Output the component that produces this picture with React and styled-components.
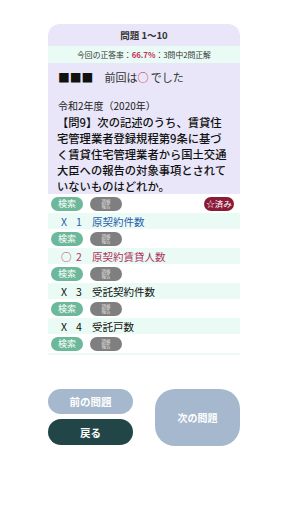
import React from "react";
import styled, { createGlobalStyle } from "styled-components";

const GlobalStyle = createGlobalStyle`
  body {
    margin: 0;
    background: #ffffff;
    font-family: "Noto Sans CJK JP", "Noto Sans", sans-serif;
    color: #222;
  }
`;

const Page = styled.div`
  width: 288px;
  padding: 24px 48px 0;
  box-sizing: border-box;
`;

const Card = styled.div`
  width: 192px;
`;

const Header = styled.div`
  height: 22px;
  display: flex;
  align-items: center;
  justify-content: center;
  background: #e8e6f8;
  border-radius: 12px 12px 0 0;
  font-size: 9.5px;
  font-weight: 700;
  color: #333;
`;

const Rate = styled.div`
  height: 17px;
  display: flex;
  align-items: center;
  justify-content: center;
  background: #e9fbf4;
  font-size: 7.8px;
  color: #333;
`;

const Percent = styled.span`
  color: #c2305c;
  font-weight: 700;
`;

const Body = styled.div`
  background: #e8e6f8;
  padding: 6px 10px 0;
  box-sizing: border-box;
`;

const Previous = styled.div`
  display: flex;
  align-items: center;
  gap: 11px;
  height: 16px;
  font-size: 11px;
  color: #333;
  margin-bottom: 13px;
`;

const Squares = styled.span`
  font-size: 11.8px;
  line-height: 16px;
  color: #111;
`;

const Circle = styled.span`
  color: #d0204a;
`;

const Year = styled.div`
  font-size: 10px;
  line-height: 16px;
  color: #222;
`;

const Question = styled.div`
  font-size: 11.3px;
  line-height: 16px;
  font-weight: 500;
  color: #111;
  margin-left: -1px;
`;

const ButtonRow = styled.div`
  height: 19px;
  display: flex;
  align-items: center;
  padding: 0 6px 0 3px;
  gap: 7px;
`;

const Pill = styled.span`
  width: 32px;
  height: 14px;
  border-radius: 7px;
  display: flex;
  flex-direction: column;
  align-items: center;
  justify-content: center;
  background: ${(p) => p.$bg};
  color: #fff;
  font-size: 9px;
  line-height: 1;
`;

const Tiny = styled.span`
  font-size: 8px;
  line-height: 9px;
  height: 5px;
  color: #e6e6e6;
  transform: scale(0.55);
  transform-origin: center center;
  white-space: nowrap;
  display: flex;
  align-items: center;
`;

const Done = styled(Pill)`
  margin-left: auto;
  width: 30px;
  height: 14px;
  font-size: 8.5px;
`;

const Choice = styled.div`
  height: 16px;
  display: flex;
  align-items: center;
  background: #e9fbf4;
  font-size: 10.5px;
  color: ${(p) => p.$color};
`;

const Mark = styled.span`
  width: 15px;
  margin-left: 13px;
`;

const Num = styled.span`
  width: 16px;
`;

const EndLine = styled.div`
  height: 2px;
  background: #e9fbf4;
`;

const Nav = styled.div`
  display: grid;
  grid-template-columns: 85px 85px;
  column-gap: 22px;
  margin-top: 34px;
`;

const Column = styled.div`
  display: flex;
  flex-direction: column;
  gap: 5px;
`;

const NavButton = styled.button`
  border: none;
  width: 85px;
  height: ${(p) => p.$h}px;
  border-radius: ${(p) => p.$r}px;
  background: ${(p) => p.$bg};
  color: #fff;
  font-family: inherit;
  font-size: ${(p) => p.$fs}px;
  font-weight: 700;
  padding: 0;
`;

const choices = [
  { mark: "X", n: 1, text: "原契約件数", color: "#2b5cae" },
  { mark: "○", n: 2, text: "原契約賃貸人数", color: "#b3325f" },
  { mark: "X", n: 3, text: "受託契約件数", color: "#111" },
  { mark: "X", n: 4, text: "受託戸数", color: "#111" },
];

const Buttons = ({ done }) => (
  <ButtonRow>
    <Pill $bg="#6cb89a">検索</Pill>
    <Pill $bg="#7f7f7f">
      <Tiny>誤植</Tiny>
      <Tiny>報告</Tiny>
    </Pill>
    {done && <Done $bg="#8a1b36">☆済み</Done>}
  </ButtonRow>
);

const App = () => {
  return (
    <Page>
      <GlobalStyle />
      <Card>
        <Header>問題 1〜10</Header>
        <Rate>
          今回の正答率：<Percent>66.7%</Percent>：3問中2問正解
        </Rate>
        <Body>
          <Previous>
            <Squares>■■■</Squares>
            <span>
              前回は<Circle>○</Circle> でした
            </span>
          </Previous>
          <Year>令和2年度（2020年）</Year>
          <Question>
            【問9】次の記述のうち、賃貸住宅管理業者登録規程第9条に基づく賃貸住宅管理業者から国土交通大臣への報告の対象事項とされていないものはどれか。
          </Question>
        </Body>
        <Buttons done />
        {choices.map((c) => (
          <React.Fragment key={c.n}>
            <Choice $color={c.color}>
              <Mark>{c.mark}</Mark>
              <Num>{c.n}</Num>
              {c.text}
            </Choice>
            <Buttons />
          </React.Fragment>
        ))}
        <EndLine />
      </Card>
      <Nav>
        <Column>
          <NavButton $h={25} $r={13} $fs={10.5} $bg="#a6b8cd">前の問題</NavButton>
          <NavButton $h={26} $r={13} $fs={10.5} $bg="#224547">戻る</NavButton>
        </Column>
        <NavButton $h={57} $r={20} $fs={10} $bg="#a6b8cd">次の問題</NavButton>
      </Nav>
    </Page>
  );
};

export default App;
